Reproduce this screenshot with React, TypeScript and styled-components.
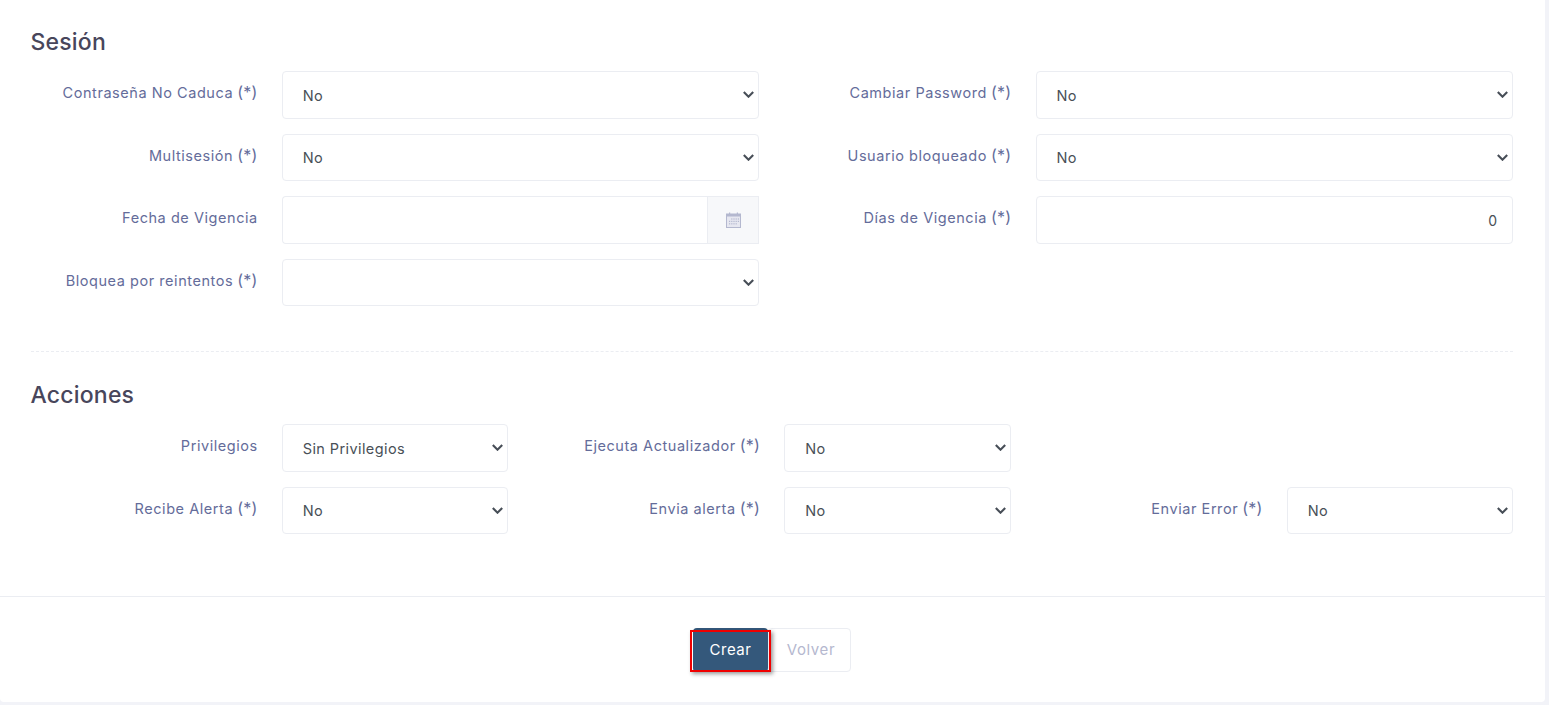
import React from 'react'
import styled, { createGlobalStyle } from 'styled-components'

const GlobalStyle = createGlobalStyle`
  html, body {
    margin: 0;
    padding: 0;
    height: 705px;
    overflow: hidden;
    background: #f2f3f8;
    font-family: Inter, "Open Sans", "Liberation Sans", sans-serif;
    font-size: 14px;
  }
  * { box-sizing: border-box; }
`

const chevron = `url("data:image/svg+xml,%3Csvg xmlns='http://www.w3.org/2000/svg' width='11' height='7' viewBox='0 0 11 7'%3E%3Cpath d='M0.8 1l4.7 4.7L10.2 1' fill='none' stroke='%23474e57' stroke-width='2.1'/%3E%3C/svg%3E")`

const CalendarIcon = () => (
  <svg width="15" height="16" viewBox="0 0 15 16">
    <rect x="0.5" y="2" width="14" height="13.5" fill="#e6e7f0" stroke="#b4b8cf" strokeWidth="1" />
    <rect x="0.5" y="2" width="14" height="2.5" fill="#b4b8cf" />
    <rect x="3" y="0.5" width="1.2" height="2.5" fill="#b4b8cf" />
    <rect x="10.8" y="0.5" width="1.2" height="2.5" fill="#b4b8cf" />
    <g fill="#b4b8cf">
      <rect x="5.2" y="6.4" width="1.2" height="1.2" />
      <rect x="7.4" y="6.4" width="1.2" height="1.2" />
      <rect x="9.6" y="6.4" width="1.2" height="1.2" />
      <rect x="11.8" y="6.4" width="1.2" height="1.2" />
      <rect x="3" y="8.8" width="1.2" height="1.2" />
      <rect x="5.2" y="8.8" width="1.2" height="1.2" />
      <rect x="7.4" y="8.8" width="1.2" height="1.2" />
      <rect x="9.6" y="8.8" width="1.2" height="1.2" />
      <rect x="11.8" y="8.8" width="1.2" height="1.2" />
      <rect x="3" y="11.2" width="1.2" height="1.2" />
      <rect x="5.2" y="11.2" width="1.2" height="1.2" />
      <rect x="7.4" y="11.2" width="1.2" height="1.2" />
      <rect x="9.6" y="11.2" width="1.2" height="1.2" />
    </g>
  </svg>
)

const Field = ({ label, required, value, options, span }: {
  label: string
  required?: boolean
  value: string
  options: string[]
  span: number
}) => (
  <>
    <Label>
      {label}
      {required && <Required>(*)</Required>}
    </Label>
    <FieldCell $span={span}>
      <Select defaultValue={value}>
        {options.map((o) => (
          <option key={o} value={o}>{o}</option>
        ))}
      </Select>
    </FieldCell>
  </>
)

const yesNo = ['No', 'Si']

const App = () => {
  return (
    <Card>
      <GlobalStyle />
      <Body>
        <Section>
          <Title>Sesión</Title>
          <Row>
            <Field label="Contraseña No Caduca" required value="No" options={yesNo} span={4} />
            <Field label="Cambiar Password" required value="No" options={yesNo} span={4} />
          </Row>
          <Row>
            <Field label="Multisesión" required value="No" options={yesNo} span={4} />
            <Field label="Usuario bloqueado" required value="No" options={yesNo} span={4} />
          </Row>
          <Row>
            <Label>Fecha de Vigencia</Label>
            <FieldCell $span={4}>
              <InputGroup>
                <DateInput type="text" />
                <Addon><CalendarIcon /></Addon>
              </InputGroup>
            </FieldCell>
            <Label>Días de Vigencia<Required>(*)</Required></Label>
            <FieldCell $span={4}>
              <NumberInput type="text" defaultValue="0" />
            </FieldCell>
          </Row>
          <Row>
            <Field label="Bloquea por reintentos" required value="" options={['', ...yesNo]} span={4} />
          </Row>
        </Section>
        <Divider />
        <Section>
          <Title>Acciones</Title>
          <Row>
            <Field label="Privilegios" value="Sin Privilegios" options={['Sin Privilegios', 'Administrador']} span={2} />
            <Field label="Ejecuta Actualizador" required value="No" options={yesNo} span={2} />
          </Row>
          <Row>
            <Field label="Recibe Alerta" required value="No" options={yesNo} span={2} />
            <Field label="Envia alerta" required value="No" options={yesNo} span={2} />
            <Field label="Enviar Error" required value="No" options={yesNo} span={2} />
          </Row>
        </Section>
      </Body>
      <Footer>
        <PrimaryButton type="button">Crear</PrimaryButton>
        <SecondaryButton type="button">Volver</SecondaryButton>
      </Footer>
    </Card>
  )
}

export default App

const Card = styled.div`
  width: 1545px;
  height: 702px;
  background: #fff;
  border-radius: 0 0 4px 4px;
  display: flex;
  flex-direction: column;
`

const Body = styled.div`
  flex: 1;
  padding: 25px 32px 0 30.5px;
`

const Section = styled.section`
  display: flex;
  flex-direction: column;
  gap: 15px;
`

const Title = styled.h3`
  margin: 0 0 1px;
  height: 30px;
  font-size: 23px;
  line-height: 35px;
  font-weight: 500;
  letter-spacing: 0.2px;
  color: #48465b;
`

const Row = styled.div`
  display: grid;
  grid-template-columns: repeat(12, 1fr);
  column-gap: 25px;
  height: 47.5px;
`

const Label = styled.label`
  grid-column: span 2;
  margin-right: -1px;
  padding-top: 12px;
  text-align: right;
  font-size: 14.5px;
  line-height: 20px;
  letter-spacing: 0.55px;
  color: #646c9a;
  white-space: nowrap;
`

const Required = styled.span`
  margin-left: 4px;
  font-size: 16px;
  line-height: 1;
  letter-spacing: 0.3px;
`

const FieldCell = styled.div<{ $span: number }>`
  grid-column: span ${(p) => p.$span};
`

const Select = styled.select`
  appearance: none;
  width: 100%;
  height: 47.5px;
  padding: 1px 16px 0 20px;
  background: #fff ${chevron} no-repeat right 4px center;
  border: 1px solid #ebedf2;
  border-radius: 4px;
  font-family: inherit;
  font-size: 14.5px;
  letter-spacing: 0.4px;
  color: #495057;
  outline: none;
`

const InputGroup = styled.div`
  display: flex;
  height: 47.5px;
`

const DateInput = styled.input`
  flex: 1;
  min-width: 0;
  border: 1px solid #ebedf2;
  border-right: none;
  border-radius: 4px 0 0 4px;
  outline: none;
`

const Addon = styled.div`
  width: 52px;
  display: flex;
  align-items: center;
  justify-content: center;
  background: #f7f8fa;
  border: 1px solid #ebedf2;
`

const NumberInput = styled.input`
  width: 100%;
  height: 47.5px;
  padding: 1px 15px 0;
  text-align: right;
  border: 1px solid #ebedf2;
  border-radius: 4px;
  font-family: inherit;
  font-size: 14px;
  color: #495057;
  outline: none;
`

const Divider = styled.div`
  margin: 45px 0 26px;
  border-top: 1px dashed #ebedf2;
`

const Footer = styled.div`
  height: 106px;
  padding: 31px 1px 0 0;
  border-top: 1px solid #ebedf2;
  display: flex;
  justify-content: center;
  align-items: flex-start;
`

const PrimaryButton = styled.button`
  position: relative;
  width: 75px;
  height: 44px;
  padding: 0 0 2px;
  background: #34587b;
  border: none;
  border-radius: 4px;
  font-family: inherit;
  font-size: 15px;
  letter-spacing: 0.5px;
  color: #fff;

  &::after {
    content: '';
    position: absolute;
    left: -3px;
    right: -3px;
    top: 2px;
    bottom: 0;
    border: 2px solid #f00000;
    box-shadow: 2px 2px 4px rgba(0, 0, 0, 0.4);
  }
`

const SecondaryButton = styled.button`
  width: 83px;
  height: 44px;
  padding: 0 0 2px 3px;
  background: #fff;
  border: 1px solid #ebedf2;
  border-radius: 4px;
  font-family: inherit;
  font-size: 15px;
  letter-spacing: 0.6px;
  color: #b5b8cf;
`
